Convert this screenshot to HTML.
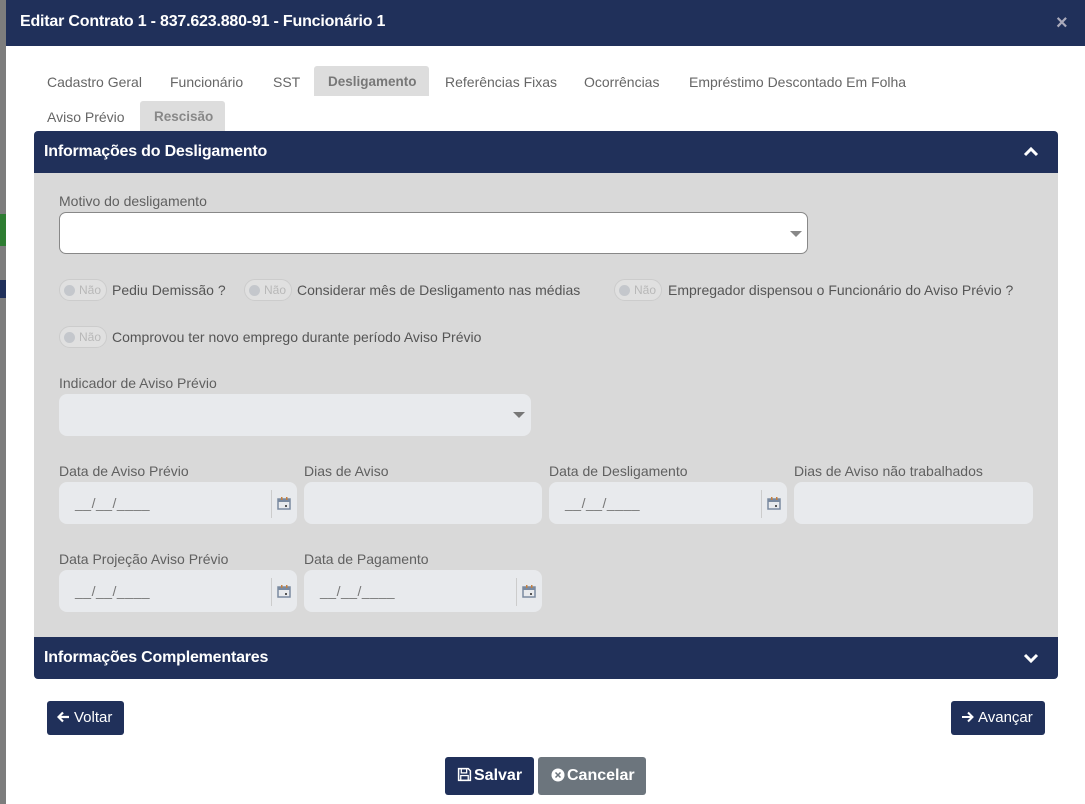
<!DOCTYPE html>
<html><head><meta charset="utf-8"><style>
*{box-sizing:border-box;margin:0;padding:0}
body{width:1085px;height:804px;position:relative;overflow:hidden;background:#fff;font-family:"Liberation Sans",sans-serif;color:#555}
.a{position:absolute}
.hdr{left:6px;top:0;width:1079px;height:46px;background:#20305a}
.title{left:20px;top:13px;font-size:16px;font-weight:bold;color:#fff;letter-spacing:-0.2px}
.tab{font-size:14px;color:#666;top:74px}
.tab2{top:109px}
.tb{background:#ddd;border-radius:3px 3px 0 0}
.ph{left:34px;width:1024px;height:42px;background:#20305a;color:#fff;font-weight:bold;font-size:16px;padding:12px 10px;letter-spacing:-0.2px}
.lbl{font-size:14px;color:#606060}
.inp{background:#e8eaed;border-radius:8px;height:42px}
.cal{position:absolute;right:0;width:26px;border-left:1px solid #ccc}
.mask{position:absolute;left:16px;top:13px;font-size:14px;color:#777;letter-spacing:0.5px}
.tg{width:48px;height:22px;border:1px solid #ccc;border-radius:11px;background:#e0e0e0}
.tg:before{content:"";position:absolute;left:4px;top:5px;width:11px;height:11px;border-radius:50%;background:#c4c7cc}
.tg span{position:absolute;left:19px;top:3px;font-size:12px;color:#b8b8b8}
.tt{font-size:14px;color:#555}
.btn{background:#20305a;color:#fff;border-radius:3px;font-size:15px;white-space:nowrap}
</style></head><body>
<div class="a" style="left:0;top:0;width:6px;height:804px;background:#7d7d7d"></div>
<div class="a" style="left:0;top:214px;width:6px;height:32px;background:#2e7d32"></div>
<div class="a" style="left:0;top:280px;width:6px;height:18px;background:#20305a"></div>
<div class="a hdr"></div>
<div class="a title">Editar Contrato 1 - 837.623.880-91 - Funcionário 1</div>
<div class="a" style="left:1056px;top:12px;font-size:20px;font-weight:bold;color:#aab">×</div>

<div class="a tb" style="left:314px;top:66px;width:115px;height:30px"></div>
<div class="a tb" style="left:140px;top:101px;width:85px;height:30px"></div>
<div class="a tab" style="left:47px">Cadastro Geral</div>
<div class="a tab" style="left:170px">Funcionário</div>
<div class="a tab" style="left:273px">SST</div>
<div class="a tab" style="left:328px;color:#777;font-weight:bold;font-size:13.5px">Desligamento</div>
<div class="a tab" style="left:445px">Referências Fixas</div>
<div class="a tab" style="left:584px">Ocorrências</div>
<div class="a tab" style="left:689px">Empréstimo Descontado Em Folha</div>
<div class="a tab tab2" style="left:47px">Aviso Prévio</div>
<div class="a tab tab2" style="left:154px;color:#888;font-weight:bold;font-size:13.5px">Rescisão</div>

<div class="a ph" style="top:131px;border-radius:4px 4px 0 0">Informações do Desligamento</div>
<svg class="a" style="left:1023px;top:146px" width="16" height="12" viewBox="0 0 16 12"><path d="M2 9 L8 3 L14 9" stroke="#fff" stroke-width="3" fill="none"/></svg>
<div class="a" style="left:34px;top:173px;width:1024px;height:464px;background:#d9d9d9"></div>

<div class="a lbl" style="left:59px;top:193px">Motivo do desligamento</div>
<div class="a" style="left:59px;top:212px;width:749px;height:42px;background:#fff;border:1px solid #888;border-radius:7px"></div>
<div class="a" style="left:790px;top:231px;border-left:6px solid transparent;border-right:6px solid transparent;border-top:6px solid #888"></div>

<div class="a tg" style="left:59px;top:279px"><span>Não</span></div>
<div class="a tt" style="left:112px;top:282px">Pediu Demissão ?</div>
<div class="a tg" style="left:244px;top:279px"><span>Não</span></div>
<div class="a tt" style="left:297px;top:282px">Considerar mês de Desligamento nas médias</div>
<div class="a tg" style="left:614px;top:279px"><span>Não</span></div>
<div class="a tt" style="left:668px;top:282px">Empregador dispensou o Funcionário do Aviso Prévio ?</div>
<div class="a tg" style="left:59px;top:326px"><span>Não</span></div>
<div class="a tt" style="left:112px;top:329px">Comprovou ter novo emprego durante período Aviso Prévio</div>

<div class="a lbl" style="left:59px;top:375px">Indicador de Aviso Prévio</div>
<div class="a inp" style="left:59px;top:394px;width:472px"></div>
<div class="a" style="left:513px;top:412px;border-left:6px solid transparent;border-right:6px solid transparent;border-top:6px solid #777"></div>

<div class="a lbl" style="left:59px;top:463px">Data de Aviso Prévio</div>
<div class="a lbl" style="left:304px;top:463px">Dias de Aviso</div>
<div class="a lbl" style="left:549px;top:463px">Data de Desligamento</div>
<div class="a lbl" style="left:794px;top:463px">Dias de Aviso não trabalhados</div>
<div class="a lbl" style="left:59px;top:551px">Data Projeção Aviso Prévio</div>
<div class="a lbl" style="left:304px;top:551px">Data de Pagamento</div>

<div class="a inp" style="left:59px;top:482px;width:238px"><span class="mask">__/__/____</span><div class="cal" style="top:8px;height:28px"></div></div>
<div class="a inp" style="left:304px;top:482px;width:238px"></div>
<div class="a inp" style="left:549px;top:482px;width:238px"><span class="mask">__/__/____</span><div class="cal" style="top:8px;height:28px"></div></div>
<div class="a inp" style="left:794px;top:482px;width:239px"></div>
<div class="a inp" style="left:59px;top:570px;width:238px"><span class="mask">__/__/____</span><div class="cal" style="top:8px;height:28px"></div></div>
<div class="a inp" style="left:304px;top:570px;width:238px"><span class="mask">__/__/____</span><div class="cal" style="top:8px;height:28px"></div></div>

<svg class="a" style="left:277px;top:496px" width="14" height="14" viewBox="0 0 14 14"><rect x="1" y="3" width="12" height="10" fill="none" stroke="#7a8aa0" stroke-width="1.5"/><rect x="1" y="3" width="12" height="3" fill="#7a8aa0"/><rect x="4" y="1" width="1.5" height="3" fill="#c48040"/><rect x="9" y="1" width="1.5" height="3" fill="#c48040"/><rect x="8" y="9" width="2" height="2" fill="#555"/></svg>
<svg class="a" style="left:767px;top:496px" width="14" height="14" viewBox="0 0 14 14"><rect x="1" y="3" width="12" height="10" fill="none" stroke="#7a8aa0" stroke-width="1.5"/><rect x="1" y="3" width="12" height="3" fill="#7a8aa0"/><rect x="4" y="1" width="1.5" height="3" fill="#c48040"/><rect x="9" y="1" width="1.5" height="3" fill="#c48040"/><rect x="8" y="9" width="2" height="2" fill="#555"/></svg>
<svg class="a" style="left:277px;top:584px" width="14" height="14" viewBox="0 0 14 14"><rect x="1" y="3" width="12" height="10" fill="none" stroke="#7a8aa0" stroke-width="1.5"/><rect x="1" y="3" width="12" height="3" fill="#7a8aa0"/><rect x="4" y="1" width="1.5" height="3" fill="#c48040"/><rect x="9" y="1" width="1.5" height="3" fill="#c48040"/><rect x="8" y="9" width="2" height="2" fill="#555"/></svg>
<svg class="a" style="left:522px;top:584px" width="14" height="14" viewBox="0 0 14 14"><rect x="1" y="3" width="12" height="10" fill="none" stroke="#7a8aa0" stroke-width="1.5"/><rect x="1" y="3" width="12" height="3" fill="#7a8aa0"/><rect x="4" y="1" width="1.5" height="3" fill="#c48040"/><rect x="9" y="1" width="1.5" height="3" fill="#c48040"/><rect x="8" y="9" width="2" height="2" fill="#555"/></svg>

<div class="a ph" style="top:637px;border-radius:0 0 4px 4px">Informações Complementares</div>
<svg class="a" style="left:1023px;top:652px" width="16" height="12" viewBox="0 0 16 12"><path d="M2 3 L8 9 L14 3" stroke="#fff" stroke-width="3" fill="none"/></svg>

<div class="a btn" style="left:47px;top:701px;width:77px;height:34px;padding:8px 0 0 10px"><svg width="13" height="12" viewBox="0 0 13 12" style="vertical-align:-1px;margin-right:4px"><path d="M12 6H2M6 1.5L1.5 6 6 10.5" stroke="#fff" stroke-width="2.2" fill="none"/></svg>Voltar</div>
<div class="a btn" style="left:951px;top:701px;width:94px;height:34px;padding:8px 0 0 10px"><svg width="13" height="12" viewBox="0 0 13 12" style="vertical-align:-1px;margin-right:4px"><path d="M1 6H11M7 1.5L11.5 6 7 10.5" stroke="#fff" stroke-width="2" fill="none"/></svg>Avançar</div>
<div class="a btn" style="left:445px;top:757px;width:89px;height:38px;padding:10px 0 0 12px;font-weight:bold;font-size:16px">
<svg width="15" height="15" viewBox="0 0 14 14" style="vertical-align:-2px;margin-right:2px"><path d="M1.5 1.5h9l2 2v9h-11z" fill="none" stroke="#fff" stroke-width="1.4"/><rect x="4" y="1.5" width="5" height="4" fill="none" stroke="#fff" stroke-width="1.2"/><rect x="3.5" y="8" width="7" height="4.5" fill="none" stroke="#fff" stroke-width="1.2"/></svg>Salvar</div>
<div class="a btn" style="left:538px;top:757px;width:108px;height:38px;padding:10px 0 0 13px;font-weight:bold;font-size:16px;background:#6c757d">
<svg width="14" height="14" viewBox="0 0 14 14" style="vertical-align:-2px;margin-right:2px"><circle cx="7" cy="7" r="6.5" fill="#fff"/><path d="M4.5 4.5l5 5M9.5 4.5l-5 5" stroke="#6c757d" stroke-width="1.5"/></svg>Cancelar</div>
</body></html>
